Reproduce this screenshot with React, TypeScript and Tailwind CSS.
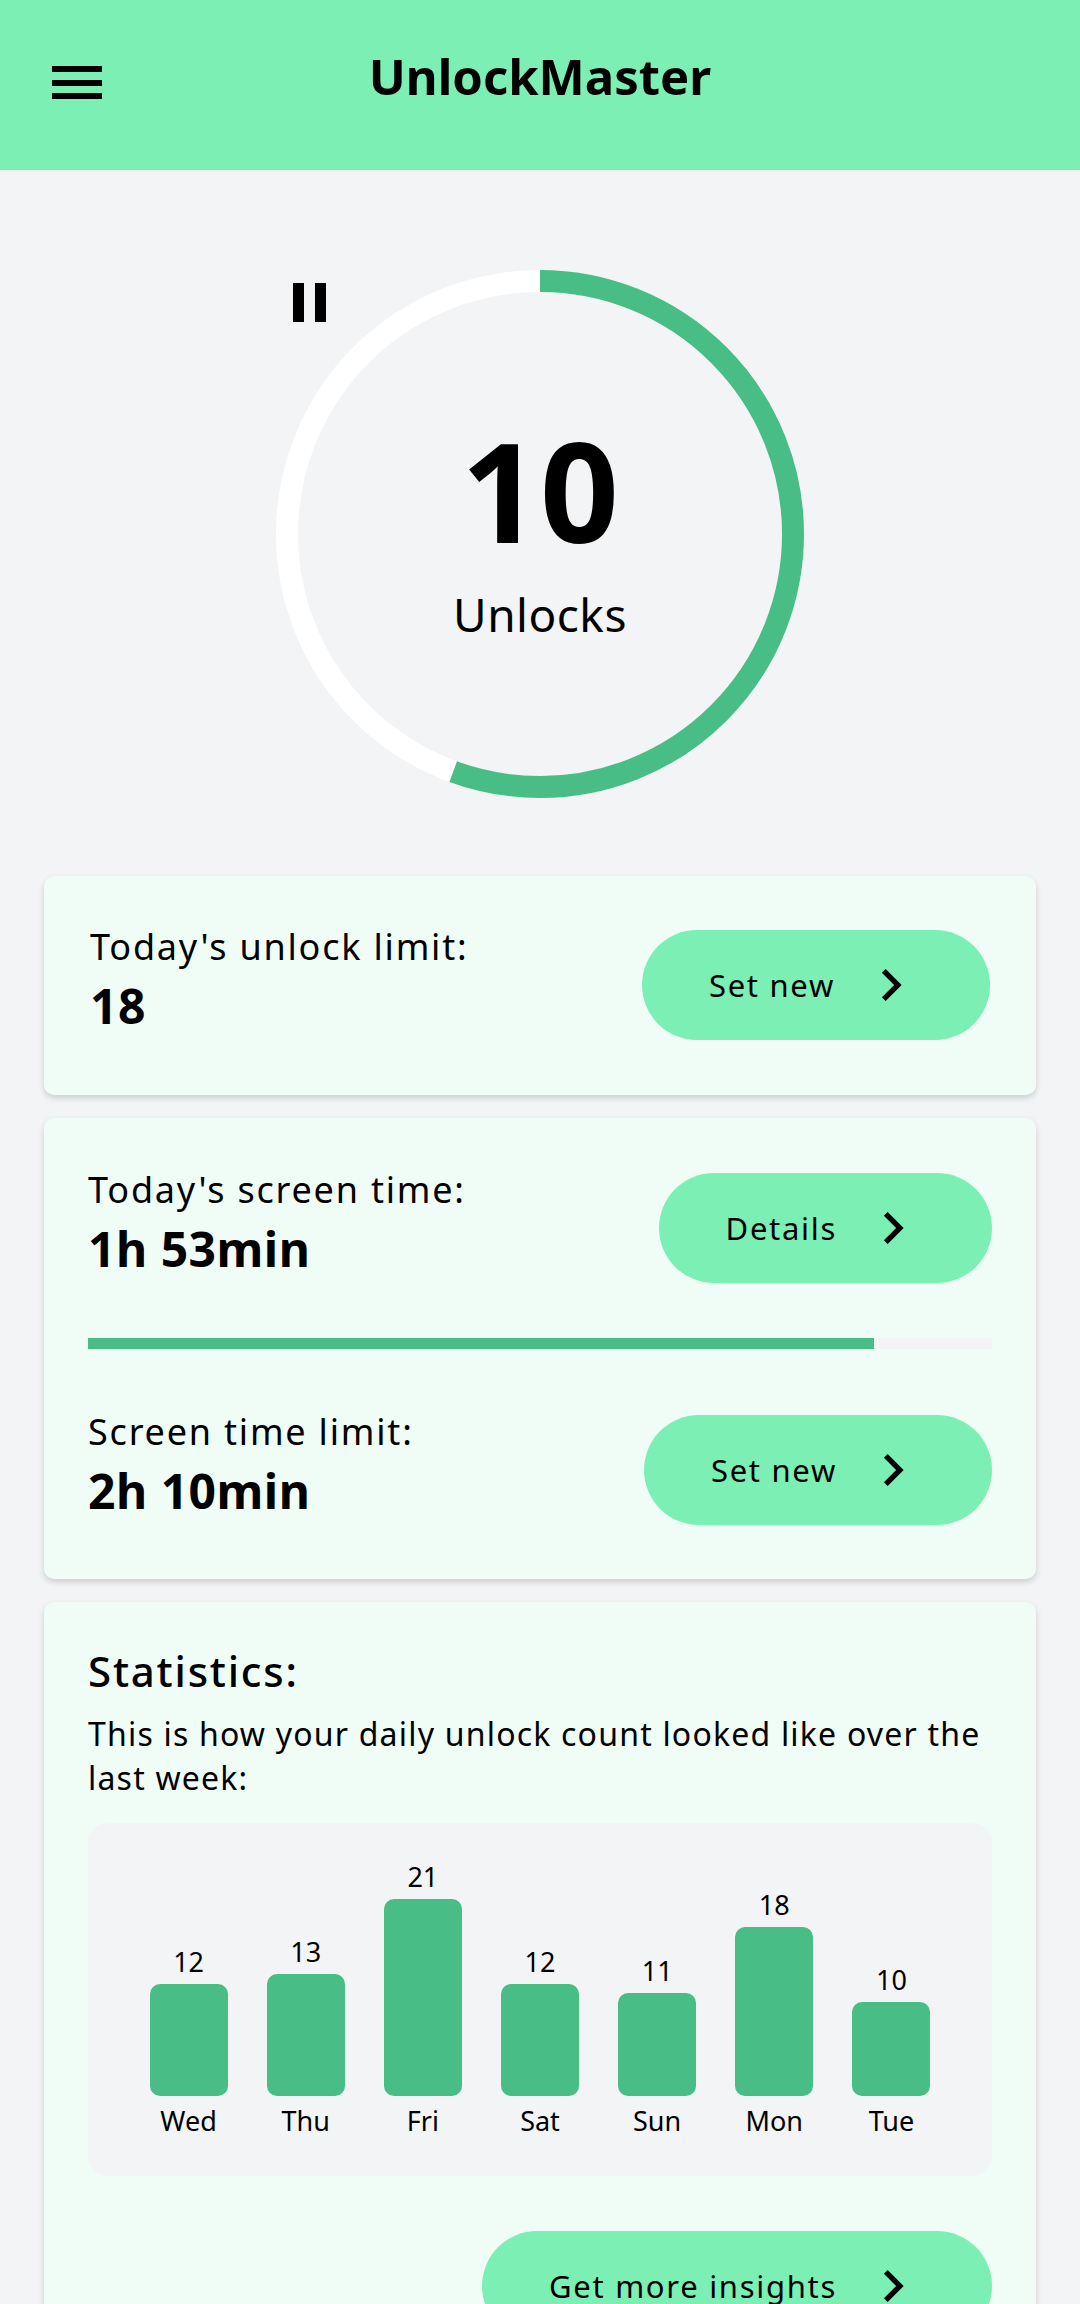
import { ReactNode } from 'react'

const FONT = '"Noto Sans", "Open Sans", sans-serif'

const week = [
  { day: 'Wed', count: 12 },
  { day: 'Thu', count: 13 },
  { day: 'Fri', count: 21 },
  { day: 'Sat', count: 12 },
  { day: 'Sun', count: 11 },
  { day: 'Mon', count: 18 },
  { day: 'Tue', count: 10 },
]

function Chevron() {
  return (
    <svg width="64" height="64" viewBox="0 0 24 24" className="shrink-0">
      <path d="M8.59 16.59L13.17 12 8.59 7.41 10 6l6 6-6 6-1.41-1.41z" fill="#000" />
    </svg>
  )
}

function PillButton({ label }: { label: string }) {
  return (
    <button className="flex h-[110px] items-center gap-[24px] rounded-full bg-[#7cf0b4] pl-[67px] pr-[67px] text-[31px] tracking-[1.7px] text-black">
      <span>{label}</span>
      <Chevron />
    </button>
  )
}

function StatRow({ label, value, action }: { label: string; value: string; action: ReactNode }) {
  return (
    <div className="flex h-[110px] items-center justify-between">
      <div className="mb-[12px] flex flex-col">
        <span className="text-[36px] leading-[44px] tracking-[1.8px]">{label}</span>
        <span className="mt-[9px] text-[48px] font-bold leading-[56px] tracking-[0.5px]">{value}</span>
      </div>
      {action}
    </div>
  )
}

function UnlockRing({ used, limit }: { used: number; limit: number }) {
  const r = 253
  const circ = 2 * Math.PI * r
  const arc = (used / limit) * circ
  return (
    <div className="relative h-[528px] w-[528px]">
      <svg width="528" height="528" viewBox="0 0 528 528">
        <circle cx="264" cy="264" r={r} fill="none" stroke="#ffffff" strokeWidth="22" />
        <circle
          cx="264"
          cy="264"
          r={r}
          fill="none"
          stroke="#48bd86"
          strokeWidth="22"
          strokeDasharray={`${arc} ${circ}`}
          transform="rotate(-90 264 264)"
        />
      </svg>
      {/* pause toggle */}
      <div className="absolute left-[17px] top-[13px] flex gap-[11px]">
        <div className="h-[39px] w-[11px] bg-black" />
        <div className="h-[39px] w-[11px] bg-black" />
      </div>
      <div className="absolute inset-0 flex flex-col items-center">
        <span className="mt-[150px] text-[138px] font-bold leading-none">{used}</span>
        <span className="mt-[33px] text-[46px] leading-none tracking-[0.5px]">Unlocks</span>
      </div>
    </div>
  )
}

export default function App() {
  const barUnit = 9.4
  return (
    <div className="min-h-screen bg-[#f2f4f6] text-black" style={{ fontFamily: FONT }}>
      <header className="flex h-[170px] items-start bg-[#7cf0b4] px-[52px] pt-[52px]">
        <svg width="50" height="33" viewBox="0 0 50 33" className="mt-[14px] shrink-0">
          <rect x="0" y="0" width="50" height="6" fill="#000" />
          <rect x="0" y="14" width="50" height="6" fill="#000" />
          <rect x="0" y="27" width="50" height="6" fill="#000" />
        </svg>
        <h1 className="flex-1 text-center text-[49px] font-bold leading-none">UnlockMaster</h1>
        <div className="w-[50px] shrink-0" />
      </header>

      <div className="flex justify-center pb-[78px] pt-[100px]">
        <UnlockRing used={10} limit={18} />
      </div>

      <div className="flex flex-col gap-[23px] px-[44px]">
        <div className="rounded-[10px] bg-[#f0fcf6] px-[46px] pb-[55px] pt-[54px] shadow-[0_3px_6px_rgba(0,0,0,0.16)]">
          <StatRow label="Today's unlock limit:" value="18" action={<PillButton label="Set new" />} />
        </div>

        <div className="rounded-[10px] bg-[#f0fcf6] px-[44px] pb-[54px] pt-[55px] shadow-[0_3px_6px_rgba(0,0,0,0.16)]">
          <StatRow label="Today's screen time:" value="1h 53min" action={<PillButton label="Details" />} />
          <div className="mb-[66px] mt-[55px] h-[11px] w-full bg-[#f3f4f6]">
            <div className="h-full bg-[#48bd86]" style={{ width: `${(113 / 130) * 100}%` }} />
          </div>
          <StatRow label="Screen time limit:" value="2h 10min" action={<PillButton label="Set new" />} />
        </div>

        <div className="rounded-[10px] bg-[#f0fcf6] px-[44px] pb-[60px] pt-[43px] shadow-[0_3px_6px_rgba(0,0,0,0.16)]">
          <h2 className="text-[42px] font-medium leading-[52px] tracking-[1.8px]">Statistics:</h2>
          <p className="mt-[15px] text-[32px] leading-[44px] tracking-[1.2px]">
            This is how your daily unlock count looked like over the last week:
          </p>
          <div className="mt-[23px] grid grid-cols-7 items-end rounded-[20px] bg-[#f3f4f6] px-[42px] pb-[39px] pt-[38px]">
            {week.map(d => (
              <div key={d.day} className="flex flex-col items-center">
                <span className="mb-[6px] text-[27px] leading-[32px]">{d.count}</span>
                <div
                  className="w-[78px] rounded-[10px] bg-[#48bd86]"
                  style={{ height: `${d.count * barUnit}px` }}
                />
                <span className="mt-[9px] text-[27px] leading-[32px]">{d.day}</span>
              </div>
            ))}
          </div>
          <div className="mt-[55px] flex justify-end">
            <PillButton label="Get more insights" />
          </div>
        </div>
      </div>
      <div className="h-[40px]" />
    </div>
  )
}
